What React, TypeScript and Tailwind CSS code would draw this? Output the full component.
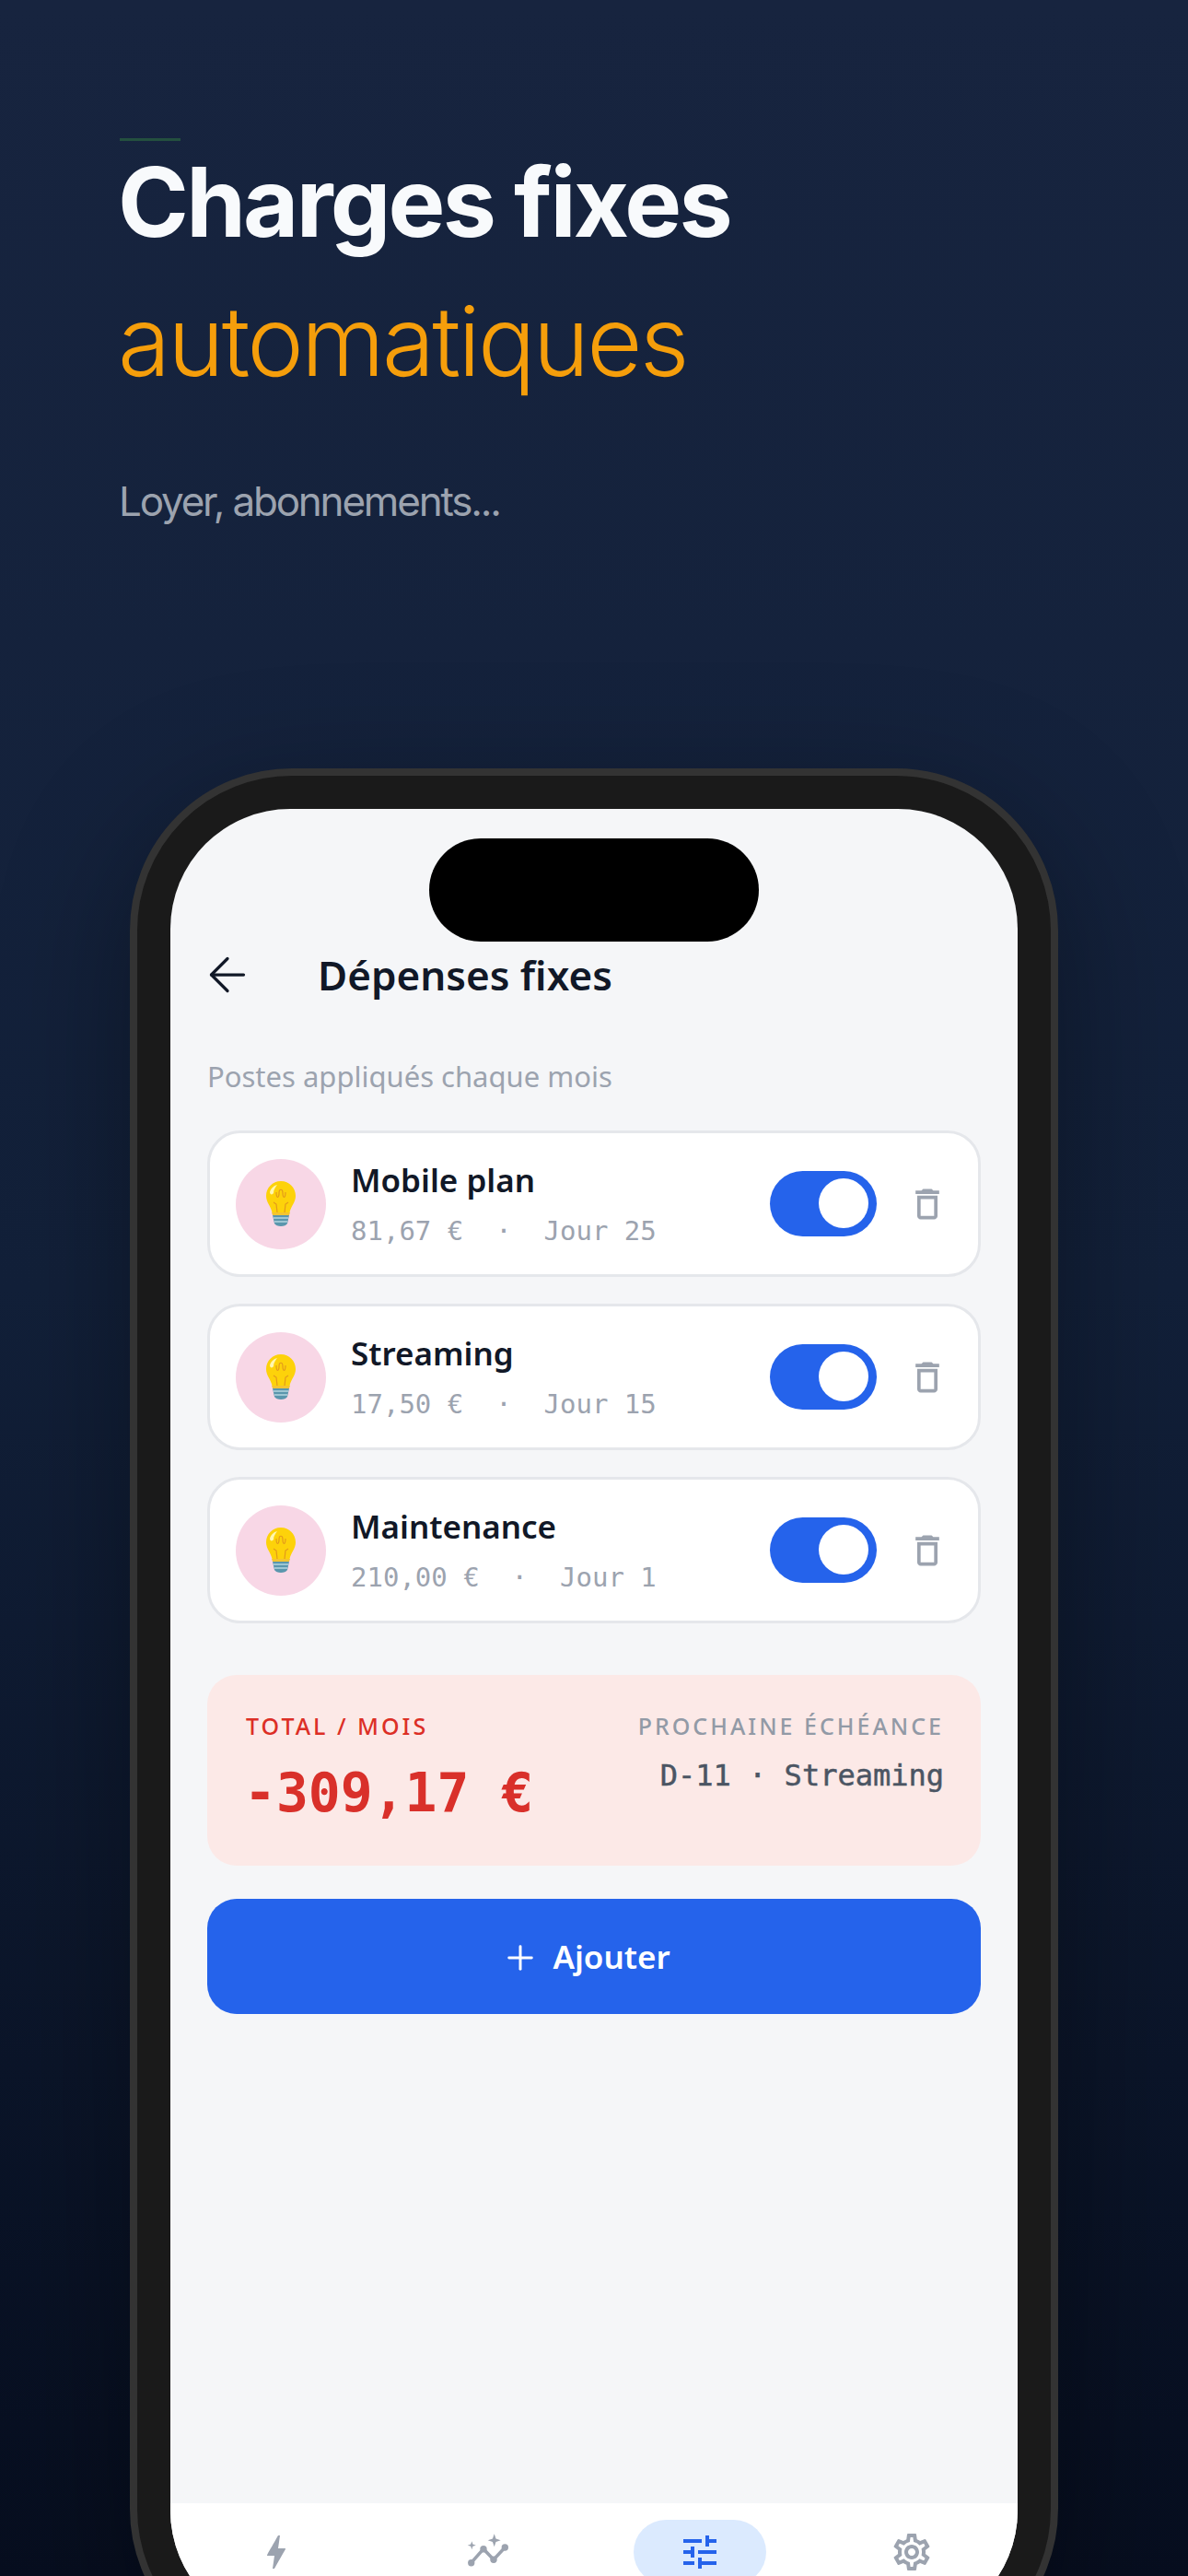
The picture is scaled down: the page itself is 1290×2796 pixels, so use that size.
import React from "react";
import { ArrowLeft, Plus } from "lucide-react";
import { MdBolt, MdOutlineDelete, MdOutlineSettings, MdTune } from "react-icons/md";

const expenses = [
  { name: "Mobile plan", amount: "81,67 €", day: "Jour 25" },
  { name: "Streaming", amount: "17,50 €", day: "Jour 15" },
  { name: "Maintenance", amount: "210,00 €", day: "Jour 1" },
];

const Bulb = () => (
  <svg width="32" height="49" viewBox="0 0 32 49">
    <path d="M16 0C7 0 0 7 0 16c0 7 5 11 6.500 18h19C27 27 32 23 32 16 32 7 25 0 16 0z" fill="#fdd20a" />
    <path d="M4 12c1-4 4-7 8-8-2 3-4 5-4 9-1 2-4 2-4-1z" fill="#fff6b0" />
    <path d="M12 34l-1-9-3-2M20 34l1-9 3-2M11 12c0 7 3 7 3 1 0-5 4-5 4 0 0 6 3 6 3-1" fill="none" stroke="#e39a1c" strokeWidth="1.2" />
    <path d="M6 34h20l-1 3H7z" fill="#f4c430" />
    <path d="M7 37h18l-2 9c-2 4-12 4-14 0z" fill="#5a96ad" />
    <path d="M8 40h16M9 44h14" stroke="#b4d6e0" strokeWidth="1.3" />
  </svg>
);

// line chart with sparkles, the package's auto graph icon is too thin here
const GraphIcon = () => (
  <svg width="48" height="48" viewBox="0 0 48 48" fill="currentColor">
    <polyline points="5.7,35.700 19,20.700 30,32.300 42.300,19" fill="none" stroke="currentColor" strokeWidth="3.5" />
    <circle cx="5.700" cy="35.700" r="3.700" />
    <circle cx="19" cy="20.700" r="3.700" />
    <circle cx="30" cy="32.300" r="3.700" />
    <circle cx="42.300" cy="19" r="3.700" />
    <polygon points="30.700,4.300 32.500,9.500 37.700,11.300 32.500,13.100 30.700,18.300 28.900,13.100 23.700,11.300 28.900,9.500" />
    <polygon points="6.300,12.200 7.400,15.600 10.800,16.700 7.400,17.800 6.300,21.200 5.200,17.800 1.800,16.700 5.200,15.600" />
  </svg>
);

const ExpenseCard = ({ name, amount, day }: { name: string; amount: string; day: string }) => (
  <div className="flex h-[159px] items-center rounded-[36px] border-[3px] border-[#e5e7eb] bg-white pr-[33px] pl-[28px]">
    <div className="flex h-[98px] w-[98px] shrink-0 items-center justify-center rounded-full bg-[#f8d7e6]">
      <Bulb />
    </div>
    <div className="ml-[27px] flex-1">
      <div className="font-['Noto_Sans'] text-[35px] leading-[46px] font-semibold text-[#111827]">{name}</div>
      <div className="mt-[13px] font-['DejaVu_Sans_Mono'] text-[29px] leading-[38px] whitespace-pre text-[#9ca3af]">
        {amount}{"  ·  "}{day}
      </div>
    </div>
    <div className="relative h-[71px] w-[116px] shrink-0 rounded-full bg-[#2563eb]">
      <div className="absolute top-[8px] right-[9px] h-[54px] w-[54px] rounded-full bg-white" />
    </div>
    <MdOutlineDelete className="ml-[33px] shrink-0 text-[#9ca3af]" size={44} />
  </div>
);

const NavItem = ({ active, children }: { active?: boolean; children: React.ReactNode }) => (
  <div className="flex flex-1 justify-center">
    <div className={`flex h-[70px] w-[144px] items-center justify-center rounded-full ${active ? "bg-[#dbeafe] text-[#2563eb]" : "text-[#9ca3af]"}`}>
      {children}
    </div>
  </div>
);

export default function App() {
  return (
    <div className="h-[2796px] w-[1290px] overflow-hidden bg-gradient-to-b from-[#17243f] via-[#122039] to-[#070e1f]">
      <header className="px-[130px] pt-[150px]">
        <div className="h-[3px] w-[66px] bg-[#24503f]" />
        <h1 className="mt-[7px] -ml-[2px] font-['Inter'] text-[104px] leading-[118px] font-bold tracking-[-2.8px] text-[#f8fafc]">Charges fixes</h1>
        <div className="mt-[33px] -ml-[2px] font-['Inter'] text-[104px] leading-[118px] font-[350] tracking-[-2.8px] text-[#f59e0b]">automatiques</div>
        <p className="mt-[87px] -ml-[1px] font-['Inter'] text-[44px] leading-[56px] tracking-[-2.2px] text-[#9ca3af]">Loyer, abonnements...</p>
      </header>

      <div className="mx-auto mt-[262px] h-[2065px] w-[1008px] rounded-[176px] border-[8px] border-[#333333] bg-[#1a1a1a] p-[36px] shadow-[0_40px_140px_rgba(0,0,0,0.35)]">
        <div className="relative flex h-[1977px] flex-col overflow-hidden rounded-[130px] bg-[#f5f6f8]">
          <div className="absolute top-[32px] left-[281px] h-[112px] w-[358px] rounded-full bg-black" />

          <div className="flex items-center pt-[150px] pl-[32px]">
            <ArrowLeft className="text-[#111827]" size={60} strokeWidth={1.3} />
            <h2 className="ml-[68px] font-['Noto_Sans'] text-[44px] leading-[60px] font-semibold text-[#111827]">Dépenses fixes</h2>
          </div>

          <div className="flex flex-col px-[40px]">
            <p className="mt-[58px] font-['Noto_Sans'] text-[31px] leading-[44px] text-[#9ca3af]">Postes appliqués chaque mois</p>

            <div className="mt-[37px] flex flex-col gap-[29px]">
              {expenses.map((expense) => (
                <ExpenseCard key={expense.name} {...expense} />
              ))}
            </div>

            <div className="mt-[56px] flex h-[207px] justify-between rounded-[32px] bg-[#fce9e7] pt-[38px] pr-[40px] pl-[42px]">
              <div>
                <div className="font-['Noto_Sans'] text-[25px] leading-[34px] font-medium tracking-[3px] text-[#dc2f26]">TOTAL / MOIS</div>
                <div className="mt-[20px] -ml-[2px] font-['DejaVu_Sans_Mono'] text-[58px] leading-[72px] font-bold text-[#d9302a]">-309,17 €</div>
              </div>
              <div className="text-right">
                <div className="font-['Noto_Sans'] text-[25px] leading-[34px] font-medium tracking-[3px] text-[#929aa6]">PROCHAINE ÉCHÉANCE</div>
                <div className="mt-[16px] font-['DejaVu_Sans_Mono'] text-[32px] leading-[42px] text-[#4b5563] [-webkit-text-stroke:0.5px_#4b5563]">D-11 · Streaming</div>
              </div>
            </div>

            <button className="mt-[36px] flex h-[125px] items-center justify-center gap-[14px] rounded-[32px] bg-[#2563eb] pt-[2px] pr-[18px] font-['Noto_Sans'] text-[35px] font-semibold text-white">
              <Plus size={42} strokeWidth={1.7} />
              Ajouter
            </button>
          </div>

          <nav className="absolute top-[1839px] right-0 bottom-0 left-0 flex bg-white pt-[18px]">
            <NavItem><MdBolt size={48} /></NavItem>
            <NavItem><GraphIcon /></NavItem>
            <NavItem active><MdTune size={48} /></NavItem>
            <NavItem><MdOutlineSettings size={48} /></NavItem>
          </nav>
        </div>
      </div>
    </div>
  );
}
